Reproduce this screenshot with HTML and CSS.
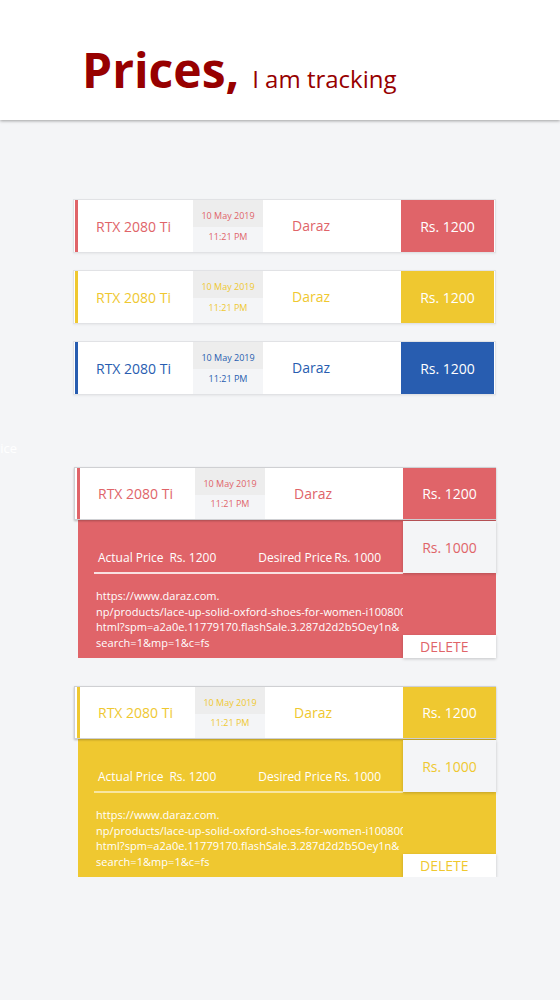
FILE: index.html
```html
<!DOCTYPE html>
<html>
<head>
<meta charset="utf-8">
<link rel="stylesheet" href="styles.css">
</head>
<body>
<header class="top">
  <h1 class="title"><span class="title-main">Prices,</span><span class="title-sub">I am tracking</span></h1>
</header>
<main class="list">
  <div class="card red">
    <div class="name">RTX 2080 Ti</div>
    <div class="date"><span class="d1">10 May 2019</span><span class="d2">11:21 PM</span></div>
    <div class="src">Daraz</div>
    <div class="price">Rs. 1200</div>
  </div>
  <div class="card yellow">
    <div class="name">RTX 2080 Ti</div>
    <div class="date"><span class="d1">10 May 2019</span><span class="d2">11:21 PM</span></div>
    <div class="src">Daraz</div>
    <div class="price">Rs. 1200</div>
  </div>
  <div class="card blue">
    <div class="name">RTX 2080 Ti</div>
    <div class="date"><span class="d1">10 May 2019</span><span class="d2">11:21 PM</span></div>
    <div class="src">Daraz</div>
    <div class="price">Rs. 1200</div>
  </div>

  <div class="ghost">Price</div>

  <div class="xcard red">
    <div class="card xhead">
      <div class="name">RTX 2080 Ti</div>
      <div class="date"><span class="d1">10 May 2019</span><span class="d2">11:21 PM</span></div>
      <div class="src">Daraz</div>
      <div class="price">Rs. 1200</div>
    </div>
    <div class="panel">
      <div class="panel-main">
        <div class="prices"><span>Actual Price</span><span class="actual">Rs. 1200</span><span class="desired">Desired Price</span><span class="want">Rs. 1000</span></div>
        <div class="url">https://www.daraz.com.<br>np/products/lace-up-solid-oxford-shoes-for-women-i100800000.<br>html?spm=a2a0e.11779170.flashSale.3.287d2d2b5Oey1n&amp;<br>search=1&amp;mp=1&amp;c=fs</div>
      </div>
      <div class="panel-side">
        <div class="target">Rs. 1000</div>
        <div class="delete">DELETE</div>
      </div>
    </div>
  </div>

  <div class="xcard yellow">
    <div class="card xhead">
      <div class="name">RTX 2080 Ti</div>
      <div class="date"><span class="d1">10 May 2019</span><span class="d2">11:21 PM</span></div>
      <div class="src">Daraz</div>
      <div class="price">Rs. 1200</div>
    </div>
    <div class="panel">
      <div class="panel-main">
        <div class="prices"><span>Actual Price</span><span class="actual">Rs. 1200</span><span class="desired">Desired Price</span><span class="want">Rs. 1000</span></div>
        <div class="url">https://www.daraz.com.<br>np/products/lace-up-solid-oxford-shoes-for-women-i100800000.<br>html?spm=a2a0e.11779170.flashSale.3.287d2d2b5Oey1n&amp;<br>search=1&amp;mp=1&amp;c=fs</div>
      </div>
      <div class="panel-side">
        <div class="target">Rs. 1000</div>
        <div class="delete">DELETE</div>
      </div>
    </div>
  </div>
</main>
</body>
</html>
```
FILE: styles.css
```css
html, body {
  margin: 0;
  padding: 0;
}
body {
  background: #f4f5f7;
  font-family: "Open Sans", "DejaVu Sans", sans-serif;
  overflow: hidden;
}
.red { --c: #e06469; --line: rgba(255,255,255,0.8); }
.yellow { --c: #efc830; --line: rgba(255,255,255,0.55); }
.blue { --c: #285db0; --line: rgba(255,255,255,0.8); }

.top {
  height: 120px;
  box-sizing: border-box;
  background: #fff;
  box-shadow: 0 1px 3px rgba(0,0,0,0.35);
  padding: 46px 0 0 82px;
}
.title {
  margin: 0;
  display: flex;
  align-items: baseline;
  color: #970000;
  line-height: 1;
}
.title-main {
  font-size: 48px;
  font-weight: 700;
}
.title-sub {
  font-size: 24px;
  font-weight: 400;
  margin-left: 13px;
}

.list {
  padding: 79px 0 0 73px;
  width: 423px;
}

.card {
  display: grid;
  grid-template-columns: 118px 70px 138px 93px;
  height: 54px;
  box-sizing: border-box;
  border: 1px solid #e1e2e5;
  padding-left: 1px;
  background: #fff;
  box-shadow: 0 1px 2px rgba(0,0,0,0.06);
  margin-bottom: 17px;
  color: var(--c);
}
.name {
  border-left: 3px solid var(--c);
  padding-left: 18px;
  display: flex;
  align-items: center;
  font-size: 14px;
}
.date {
  display: grid;
  grid-template-rows: 27px 1fr;
  font-size: 9px;
  text-align: center;
}
.d1 {
  background: #ededed;
  display: flex;
  align-items: center;
  justify-content: center;
  padding-top: 4px;
}
.d2 {
  background: #f4f5f7;
  display: flex;
  align-items: center;
  justify-content: center;
  padding-bottom: 7px;
}
.src {
  display: flex;
  align-items: center;
  padding-left: 29px;
  padding-bottom: 1px;
  font-size: 14px;
}
.price {
  background: var(--c);
  color: #fff;
  display: flex;
  align-items: center;
  justify-content: center;
  font-size: 14px;
}

.ghost {
  margin: 45px 0 0 -86px;
  font-size: 13px;
  line-height: 16px;
  color: #fff;
  height: 16px;
}

.xcard {
  margin: 11px 0 0 1px;
}
.xcard + .xcard {
  margin-top: 28px;
}
.xhead {
  height: 53px;
  padding-left: 2px;
  margin-bottom: 0;
  border-color: #cfd0d3;
  box-shadow: 0 1px 2px rgba(0,0,0,0.25);
  position: relative;
  z-index: 1;
}
.panel {
  margin-left: 4px;
  height: 138px;
  background: var(--c);
  display: grid;
  grid-template-columns: 1fr 93px;
}
.panel-main {
  overflow: hidden;
  color: #fff;
}
.prices {
  margin-left: 16px;
  padding: 0 0 6px 4px;
  height: 54px;
  box-sizing: border-box;
  border-bottom: 2px solid var(--line);
  display: flex;
  align-items: flex-end;
  font-size: 12px;
  line-height: 16px;
  white-space: nowrap;
}
.actual { margin-left: 6px; }
.desired { margin-left: 42px; }
.want { margin-left: 2px; }
.url {
  padding: 14px 0 0 18px;
  font-size: 11px;
  line-height: 15.6px;
  letter-spacing: 0.05px;
  white-space: nowrap;
}
.panel-side {
  display: flex;
  flex-direction: column;
  position: relative;
  z-index: 2;
}
.target {
  margin-top: 1px;
  height: 52px;
  background: #f4f5f7;
  box-shadow: 0 1px 3px rgba(0,0,0,0.2);
  color: var(--c);
  display: flex;
  align-items: center;
  justify-content: center;
  font-size: 14px;
}
.delete {
  margin-top: auto;
  height: 23px;
  background: #fff;
  box-shadow: 0 1px 3px rgba(0,0,0,0.2);
  color: var(--c);
  display: flex;
  align-items: center;
  padding-left: 17px;
  font-size: 14px;
}
```
